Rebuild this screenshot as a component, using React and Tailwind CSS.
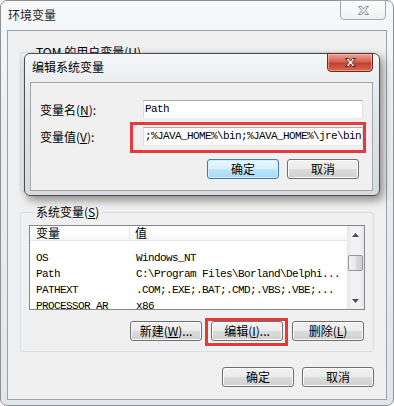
import React from "react";

const rows = [
  ["OS", "Windows_NT"],
  ["Path", "C:\\Program Files\\Borland\\Delphi..."],
  ["PATHEXT", ".COM;.EXE;.BAT;.CMD;.VBS;.VBE;..."],
  ["PROCESSOR_AR", "x86"],
];

function CloseX({ fill, stroke }) {
  return (
    <svg width="13" height="11" viewBox="0 0 13 11">
      <path
        d="M1.5 1.5h3l2 2.6 2-2.6h3L8.2 5.5l3.3 4h-3l-2-2.6-2 2.6h-3l3.3-4z"
        fill={fill}
        stroke={stroke}
        strokeWidth="1"
        strokeLinejoin="round"
      />
    </svg>
  );
}

function Btn({ children, focus }) {
  return (
    <div
      className={
        focus
          ? "w-[72px] h-[20px] flex items-center justify-center rounded-[3px] border border-[#3c7fb1] bg-[linear-gradient(#eaf6fd,#d9f0fc_50%,#bee6fd_50%,#a7d9f5)] shadow-[inset_0_0_0_1px_#d4eefc] text-[12px] leading-[14px]"
          : "w-[72px] h-[20px] flex items-center justify-center rounded-[3px] border border-[#707070] bg-[linear-gradient(#f2f2f2,#ebebeb_50%,#dddddd_50%,#cfcfcf)] shadow-[inset_0_0_0_1px_#fbfbfb] text-[12px] leading-[14px]"
      }
    >
      {children}
    </div>
  );
}

const U = ({ c }) => <span className="underline underline-offset-1">{c}</span>;

function Arrow({ up }) {
  return (
    <svg width="7" height="4" viewBox="0 0 7 4">
      <path d={up ? "M0 4L3.5 0L7 4z" : "M0 0L3.5 4L7 0z"} fill="#4d4d4d" />
    </svg>
  );
}

export default function App() {
  return (
    <div className="w-[394px] h-[406px] overflow-hidden bg-white font-['Noto_Sans_CJK_SC',sans-serif] text-black">
      <div className="relative w-[394px] h-[406px] flex flex-col rounded-[7px] border border-[#8c9196] bg-[linear-gradient(#f7f8f9,#eceef0_30%,#e3e5e8)] px-[6px] pb-[5px]">
        {/* title bar */}
        <div className="h-[29px] flex items-start justify-between">
          <span className="pl-[1px] pt-[7px] text-[12px] leading-[14px] text-[#1e1e1e]">环境变量</span>
          <div className="-mt-px mr-px w-[46px] h-[20px] flex items-center justify-center rounded-b-[4px] border border-[#a4a8ad] bg-[linear-gradient(#fdfdfd,#eef0f2)]">
            <CloseX fill="#f4f4f4" stroke="#8a8e93" />
          </div>
        </div>

        {/* client */}
        <div className="flex-1 flex flex-col border border-[#9aa1a8] bg-[#f0f0f0] px-[12px] pt-[14px]">
          {/* user group, mostly hidden under the edit dialog */}
          <fieldset className="h-[147px] rounded-[3px] border border-[#d5dfe5] px-[8px]">
            <legend className="ml-[5px] px-[2px] text-[12px] leading-[14px]">TOM 的用户变量(<U c="U" />)</legend>
          </fieldset>

          <fieldset className="mt-[13px] rounded-[3px] border border-[#d5dfe5] px-[8px] pt-[6px] pb-[10px]">
            <legend className="ml-[5px] px-[2px] text-[12px] leading-[14px]">系统变量(<U c="S" />)</legend>
            <div className="h-[85px] flex border border-[#828790] bg-white overflow-hidden">
              <div className="flex-1 flex flex-col">
                <div className="h-[23px] flex bg-[linear-gradient(#ffffff,#ffffff_50%,#f4f5f7)] border-b border-[#e5e5e5] text-[12px] leading-[14px]">
                  <div className="w-[100px] flex items-center pl-[6px] border-r border-[#e5e5e5]">变量</div>
                  <div className="flex-1 flex items-center pl-[5px]">值</div>
                </div>
                <div className="pt-[9px] font-['Liberation_Mono',monospace] text-[11px] tracking-[-0.6px] leading-[16px]">
                  {rows.map(([k, v]) => (
                    <div key={k} className="h-[16px] flex whitespace-nowrap">
                      <div className="w-[100px] pl-[6px] overflow-hidden">{k}</div>
                      <div className="flex-1 pl-[6px] overflow-hidden">{v}</div>
                    </div>
                  ))}
                </div>
              </div>
              <div className="w-[17px] flex flex-col bg-[linear-gradient(90deg,#e6e6e6,#f2f2f2_30%,#f2f2f2_70%,#e6e6e6)]">
                <div className="h-[17px] flex items-center justify-center"><Arrow up /></div>
                <div className="flex-1 pt-[12px]">
                  <div className="mx-[1px] h-[16px] rounded-[2px] border border-[#979797] bg-[linear-gradient(90deg,#f3f3f3,#e8e8e8_50%,#d9d9d9_50%,#cfcfcf)]" />
                </div>
                <div className="h-[17px] flex items-center justify-center"><Arrow /></div>
              </div>
            </div>
            <div className="mt-[11px] pr-[1px] flex justify-end gap-[9px]">
              <Btn>新建(<U c="W" />)...</Btn>
              <div className="relative">
                <Btn>编辑(<U c="I" />)...</Btn>
                <div className="absolute -left-[6px] -right-[5px] -top-[3px] -bottom-[5px] border-[3px] border-[#e63a3a]" />
              </div>
              <Btn>删除(<U c="L" />)</Btn>
            </div>
          </fieldset>

          <div className="mt-[15px] flex justify-end gap-[8px]">
            <Btn>确定</Btn>
            <Btn>取消</Btn>
          </div>
        </div>

        {/* edit dialog on top */}
        <div className="absolute left-[23px] top-[52px] w-[356px] h-[143px] flex flex-col rounded-[6px] border border-[#4b4f54] bg-[linear-gradient(#f4f6f8,#e2e5e9_40%,#d6dadf)] shadow-[3px_4px_10px_rgba(0,0,0,0.45)] pl-[5px] pr-[6px] pb-[4px]">
          <div className="h-[28px] flex items-start justify-between">
            <span className="pl-[2px] pt-[6px] text-[12px] leading-[14px]">编辑系统变量</span>
            <div className="-mt-px w-[46px] h-[19px] flex items-center justify-center rounded-b-[4px] border border-[#6e2a22] bg-[linear-gradient(#e9a89b,#d2604f_45%,#c2402f_55%,#d86a52)] shadow-[inset_0_0_0_1px_rgba(255,200,190,0.5)]">
              <CloseX fill="#ffffff" stroke="#5a1d15" />
            </div>
          </div>
          <div className="flex-1 flex flex-col border border-[#a3a7ab] bg-[#f0f0f0] pt-[17px]">
            <div className="flex items-center">
              <div className="w-[112px] pl-[9px] text-[12px] leading-[14px]">变量名(<U c="N" />):</div>
              <div className="flex-1 mr-[9px] h-[19px] border border-[#abadb3] border-l-[#dbdfe6] border-r-[#dbdfe6] border-b-[#e3e9ef] bg-white pl-[1px] font-['Liberation_Mono',monospace] text-[11px] tracking-[-0.6px] leading-[17px] whitespace-nowrap overflow-hidden">
                Path
              </div>
            </div>
            <div className="mt-[8px] flex items-center">
              <div className="w-[112px] pl-[9px] text-[12px] leading-[14px]">变量值(<U c="V" />):</div>
              <div className="relative flex-1 mr-[9px] h-[19px]">
                <div className="h-[19px] border border-[#abadb3] border-l-[#dbdfe6] border-r-[#dbdfe6] border-b-[#e3e9ef] bg-white pl-[1px] font-['Liberation_Mono',monospace] text-[11px] tracking-[-0.6px] leading-[17px] whitespace-nowrap overflow-hidden">
                  ;%JAVA_HOME%\bin;%JAVA_HOME%\jre\bin
                </div>
                <div className="absolute -left-[13px] -right-[3px] -top-[5px] -bottom-[7px] border-[3px] border-[#e63a3a]" />
              </div>
            </div>
            <div className="mt-[13px] pr-[13px] flex justify-end gap-[8px]">
              <Btn focus>确定</Btn>
              <Btn>取消</Btn>
            </div>
          </div>
        </div>
      </div>
    </div>
  );
}
